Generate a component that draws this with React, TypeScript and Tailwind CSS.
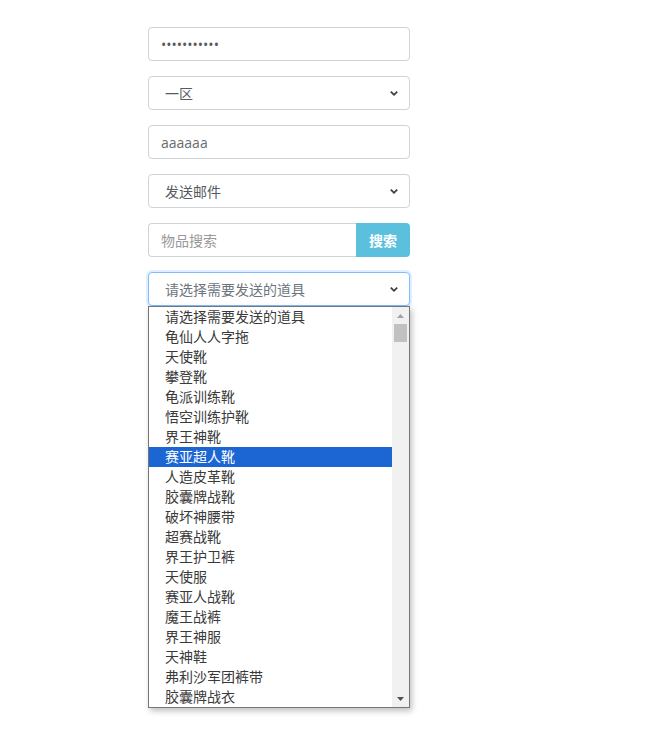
import React from "react";

const items = [
  "请选择需要发送的道具",
  "龟仙人人字拖",
  "天使靴",
  "攀登靴",
  "龟派训练靴",
  "悟空训练护靴",
  "界王神靴",
  "赛亚超人靴",
  "人造皮革靴",
  "胶囊牌战靴",
  "破坏神腰带",
  "超赛战靴",
  "界王护卫裤",
  "天使服",
  "赛亚人战靴",
  "魔王战裤",
  "界王神服",
  "天神鞋",
  "弗利沙军团裤带",
  "胶囊牌战衣",
];

const font = { fontFamily: '"Open Sans", "Noto Sans CJK SC", sans-serif' };

function Chevron() {
  return (
    <svg width="10" height="8" viewBox="0 0 10 8" className="shrink-0">
      <path d="M1.8 2.6 L5 5.8 L8.2 2.6" fill="none" stroke="#3a3f45" strokeWidth="1.8" />
    </svg>
  );
}

function Select({ text, focused }: { text: string; focused?: boolean }) {
  return (
    <div
      className={
        "h-[34px] w-full rounded-[4px] border bg-white flex items-center justify-between pl-4 pr-[10px] text-[14px] text-[#555b61] " +
        (focused ? "border-[#80bdff] shadow-[0_0_0_2px_rgba(0,123,255,0.12)]" : "border-[#ced4da]")
      }
    >
      <span className={focused ? "text-[#6c757d]" : ""}>{text}</span>
      <Chevron />
    </div>
  );
}

export default function App() {
  return (
    <div className="w-[661px] h-[753px] bg-white" style={font}>
      <div className="ml-[148px] w-[262px] pt-[27px] flex flex-col gap-[15px]">
        <div className="h-[34px] rounded-[4px] border border-[#ced4da] flex items-center px-3 text-[14px] text-[#555b61]">
          •••••••••••
        </div>
        <Select text="一区" />
        <div className="h-[34px] rounded-[4px] border border-[#ced4da] flex items-center px-3 text-[14px] text-[#666b70]">
          aaaaaa
        </div>
        <Select text="发送邮件" />
        <div className="h-[34px] flex">
          <div className="flex-1 rounded-l-[4px] border border-[#ced4da] border-r-0 flex items-center px-3 text-[14px] text-[#999]">
            物品搜索
          </div>
          <div className="w-[54px] rounded-r-[4px] bg-[#5bc0de] flex items-center justify-center text-white text-[14px] font-bold">
            搜索
          </div>
        </div>
        <div className="relative">
          <Select text="请选择需要发送的道具" focused />
          <div className="absolute left-0 top-[34px] w-[262px] h-[402px] border border-[#767676] bg-white shadow-[2px_3px_6px_rgba(0,0,0,0.25)] flex">
            <div className="flex-1 flex flex-col text-[14px] text-[#3a3a3a]">
              {items.map((it, i) => (
                <div
                  key={i}
                  className={
                    "h-[20px] leading-[19px] pl-4 " +
                    (i === 7 ? "bg-[#1c66d4] text-white" : "")
                  }
                >
                  {it}
                </div>
              ))}
            </div>
            <div className="w-[17px] bg-[#f1f1f1] flex flex-col items-center">
              <div className="h-[17px] flex items-center justify-center">
                <svg width="7" height="4" viewBox="0 0 7 4">
                  <path d="M0 4 L3.5 0 L7 4 Z" fill="#a3a3a3" />
                </svg>
              </div>
              <div className="w-[13px] h-[18px] bg-[#c1c1c1]" />
              <div className="flex-1" />
              <div className="h-[17px] flex items-center justify-center">
                <svg width="7" height="4" viewBox="0 0 7 4">
                  <path d="M0 0 L7 0 L3.5 4 Z" fill="#505050" />
                </svg>
              </div>
            </div>
          </div>
        </div>
      </div>
    </div>
  );
}
